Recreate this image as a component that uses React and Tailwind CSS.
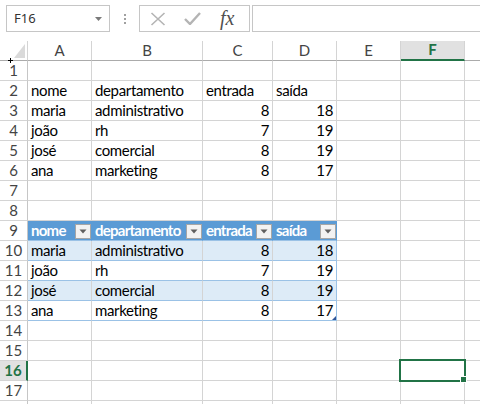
import React from "react";

const COLS = [
  { key: "A", w: "w-[64px]" },
  { key: "B", w: "w-[111px]" },
  { key: "C", w: "w-[70px]" },
  { key: "D", w: "w-[64px]" },
  { key: "E", w: "w-[64px]" },
  { key: "F", w: "w-[64px]" },
];

const DATA = [
  ["maria", "administrativo", 8, 18],
  ["joão", "rh", 7, 19],
  ["josé", "comercial", 8, 19],
  ["ana", "marketing", 8, 17],
];
const HEAD = ["nome", "departamento", "entrada", "saída"];

function cellContent(r, c) {
  if (c > 3) return null;
  if (r === 2 || r === 9) return HEAD[c];
  if (r >= 3 && r <= 6) return DATA[r - 3][c];
  if (r >= 10 && r <= 13) return DATA[r - 10][c];
  return null;
}

function FilterBtn() {
  return (
    <div className="absolute right-0 bottom-[1px] w-[16px] h-[15px] bg-[#f2f2f2] border border-[#a6a6a6] flex items-center justify-center">
      <svg width="8" height="5" viewBox="0 0 8 5">
        <path d="M0.5 0.5 L7.5 0.5 L4 4.5 Z" fill="#5f5f5f" />
      </svg>
    </div>
  );
}

function Cell({ r, c }) {
  const col = COLS[c];
  const v = cellContent(r, c);
  const inTable = r >= 9 && r <= 13 && c <= 3;
  const isHead = r === 9 && c <= 3;
  const band = r === 10 || r === 12;
  let cls = `relative ${col.w} shrink-0 h-[20px] border-r border-b flex items-end pb-[1px] text-[15px] leading-[18px] `;
  if (isHead) {
    cls += "bg-[#5b9bd5] text-white font-bold tracking-[-0.75px] border-r-[#5b9bd5] border-b-[#9bc2e6] ";
  } else if (inTable) {
    cls += (band ? "bg-[#ddebf7] " : "bg-white ") + "text-black tracking-[-0.35px] border-b-[#9bc2e6] ";
    cls += c === 3 ? "border-r-[#9bc2e6] " : "border-r-[#d4d4d4] ";
  } else {
    cls += "border-[#d4d4d4] text-black tracking-[-0.35px] ";
  }
  const isNum = typeof v === "number";
  cls += isNum ? "justify-end pr-[3px] " : "justify-start pl-[3px] ";
  return (
    <div className={cls}>
      {v !== null && <span className="whitespace-nowrap">{v}</span>}
      {isHead && <FilterBtn />}
      {r === 13 && c === 3 && (
        <svg className="absolute right-0 bottom-0" width="4" height="4" viewBox="0 0 4 4">
          <path d="M4 0 L4 4 L0 4 Z" fill="#2f5597" />
        </svg>
      )}
    </div>
  );
}

function Row({ r, label = true }) {
  const sel = r === 16;
  return (
    <div className="flex">
      <div
        className={
          "w-[28px] shrink-0 h-[20px] border-b border-b-[#d4d4d4] flex items-end justify-center pb-[1px] text-[15px] leading-[18px] " +
          (sel
            ? "bg-[#e1e1e1] text-[#217346] font-bold border-r-2 border-r-[#217346]"
            : "bg-white text-[#444444] border-r border-r-[#c6c6c6]")
        }
      >
        {label ? r : null}
      </div>
      {COLS.map((col, c) => (
        <Cell key={col.key} r={r} c={c} />
      ))}
      <div className="flex-1 h-[20px] border-b border-[#d4d4d4]" />
    </div>
  );
}

export default function App() {
  const rows = Array.from({ length: 17 }, (_, i) => i + 1);
  return (
    <div className="relative w-[480px] h-[404px] overflow-hidden bg-white font-['Lato',sans-serif]">
      {/* Formula bar */}
      <div className="h-[41px] flex items-start pt-[5px] font-['Noto_Sans',sans-serif]">
        <div className="ml-[6px] w-[104px] h-[27px] border border-[#c6c6c6] flex items-center justify-between pl-[7px] pr-[7px]">
          <span className="text-[13px] text-[#333333]">F16</span>
          <svg width="7" height="4" viewBox="0 0 7 4">
            <path d="M0 0 L7 0 L3.5 4 Z" fill="#7a7a7a" />
          </svg>
        </div>
        <div className="w-[29px] h-[27px] flex flex-col items-center justify-center gap-[2px]">
          <div className="w-[2px] h-[2px] bg-[#a0a0a0]" />
          <div className="w-[2px] h-[2px] bg-[#a0a0a0]" />
          <div className="w-[2px] h-[2px] bg-[#a0a0a0]" />
        </div>
        <div className="w-[111px] h-[27px] border border-[#c6c6c6] flex items-center">
          <svg className="ml-[10px]" width="16" height="14" viewBox="0 0 16 14">
            <path d="M1.5 1 L14.5 13 M14.5 1 L1.5 13" stroke="#b4b4b4" strokeWidth="1.6" />
          </svg>
          <svg className="ml-[18px]" width="17" height="13" viewBox="0 0 17 13">
            <path d="M1 7 L6 12 L16 1" stroke="#b4b4b4" strokeWidth="2.4" fill="none" />
          </svg>
          <span className="ml-[19px] font-['Liberation_Serif',serif] italic text-[20px] leading-none text-[#505050] -mt-[2px]">
            fx
          </span>
        </div>
        <div className="ml-[2px] flex-1 h-[27px] border border-r-0 border-[#c6c6c6]" />
      </div>

      {/* Column header */}
      <div className="flex h-[20px]">
        <div className="relative w-[28px] shrink-0 h-[20px] border-r border-b border-r-[#d4d4d4] border-b-[#ababab]">
          <svg className="absolute left-[14px] top-[3px]" width="11" height="14" viewBox="0 0 11 14">
            <path d="M0 14 L11 14 L11 0 Z" fill="#dadada" />
          </svg>
        </div>
        {COLS.map((col) => {
          const sel = col.key === "F";
          return (
            <div
              key={col.key}
              className={
                `${col.w} shrink-0 h-[20px] border-r border-r-[#d4d4d4] flex items-end justify-center pb-[1px] text-[15px] leading-[18px] ` +
                (sel
                  ? "bg-[#e1e1e1] text-[#217346] font-bold border-b-2 border-b-[#217346]"
                  : "bg-white text-[#444444] border-b border-b-[#ababab]")
              }
            >
              {col.key}
            </div>
          );
        })}
        <div className="flex-1 h-[20px] border-b border-b-[#ababab]" />
      </div>

      {rows.map((r) => (
        <Row key={r} r={r} />
      ))}
      <Row r={18} label={false} />

      {/* cursor mark */}
      <svg className="absolute left-[8px] top-[58px]" width="5" height="5" viewBox="0 0 5 5">
        <path d="M2.5 0 V5 M0 2.5 H5" stroke="#000" strokeWidth="1" />
      </svg>

      {/* selection F16 */}
      <div className="absolute left-[399px] top-[359px] w-[67px] h-[23px] border-2 border-[#217346]" />
      <div className="absolute left-[460px] top-[376px] w-[7px] h-[7px] bg-[#217346] border border-white" />
    </div>
  );
}
